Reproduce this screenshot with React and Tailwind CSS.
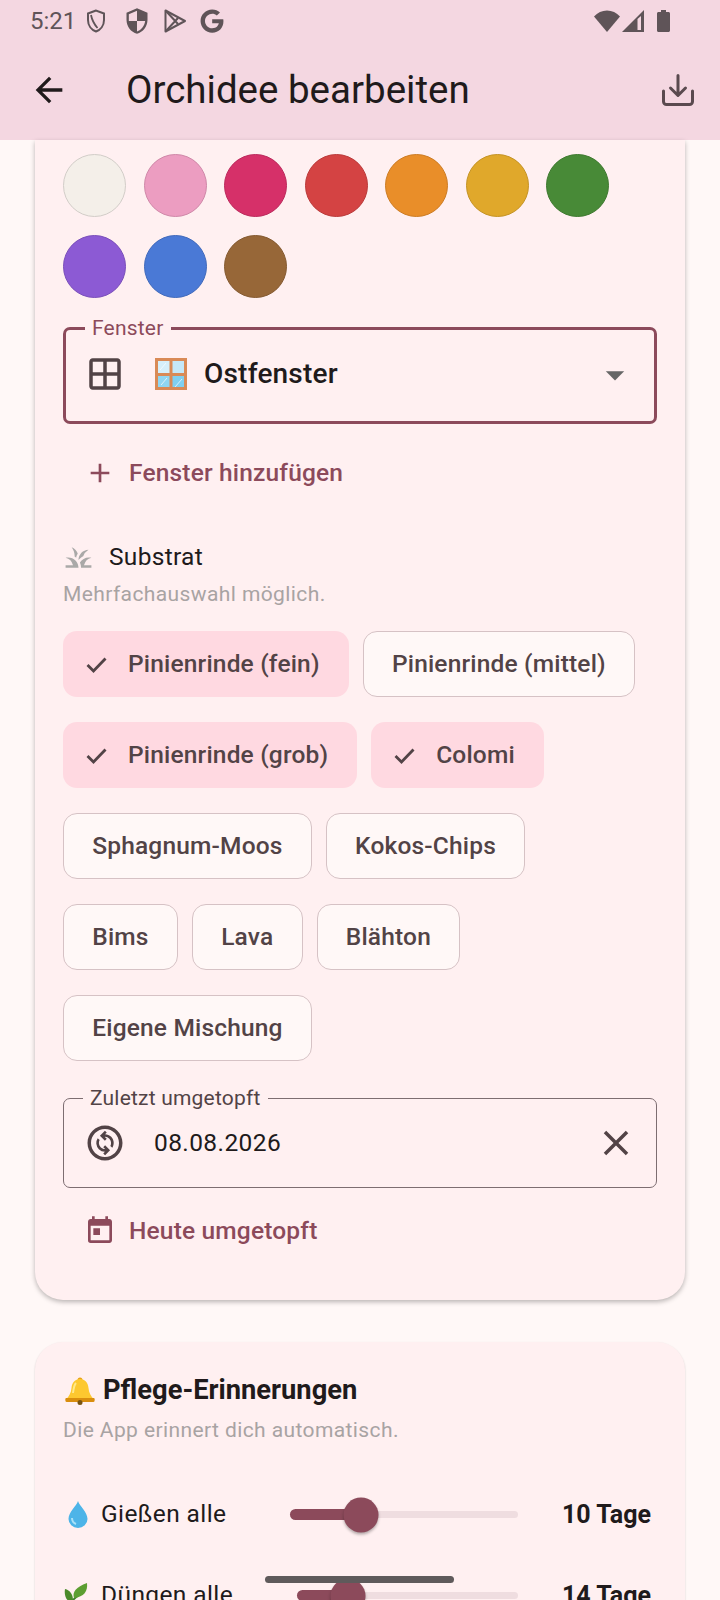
import React from "react";
import {
  MdAdd,
  MdArrowBack,
  MdArrowDropDown,
  MdClose,
  MdGrass,
  MdOutlineChangeCircle,
  MdOutlineWindow,
  MdSecurity,
  MdToday,
} from "react-icons/md";
import { FaGoogle } from "react-icons/fa";

const COLORS_ROW = [
  "bg-[#f4efe9] border-[#d2cdc8]",
  "bg-[#ec9dc1] border-[#cf88a8]",
  "bg-[#d63069] border-[#bb2a5c]",
  "bg-[#d44343] border-[#ba3a3a]",
  "bg-[#e98e29] border-[#cc7c24]",
  "bg-[#e0a82b] border-[#c49325]",
  "bg-[#488a37] border-[#3f7930]",
  "bg-[#8c5ad4] border-[#7a4fba]",
  "bg-[#4a79d6] border-[#416abb]",
  "bg-[#976738] border-[#845a31]",
];

const SUBSTRATE_ROWS = [
  [
    { label: "Pinienrinde (fein)", selected: true },
    { label: "Pinienrinde (mittel)" },
  ],
  [
    { label: "Pinienrinde (grob)", selected: true },
    { label: "Colomi", selected: true },
  ],
  [{ label: "Sphagnum-Moos" }, { label: "Kokos-Chips" }],
  [{ label: "Bims" }, { label: "Lava" }, { label: "Blähton" }],
  [{ label: "Eigene Mischung" }],
];

function StatusBar() {
  return (
    <div className="flex h-[42px] items-center pl-[30px] text-[#5f5458]">
      <span className="w-[57px] text-[24px] leading-none">5:21</span>
      <svg viewBox="0 0 18 24" className="h-[24px] w-[18px]" fill="none" stroke="currentColor" strokeWidth="2">
        <path d="M9 1.5 1 4.5v6.500c0 5.400 3.400 9.800 8 11.500 4.600-1.700 8-6.100 8-11.500V4.500z" />
        <path d="M4 6c1 5 3 9 6.500 13" strokeWidth="1.800" />
      </svg>
      <MdSecurity className="ml-[18px] -mr-[2px] h-[28px] w-[28px]" />
      <svg viewBox="0 0 22 24" className="ml-[15px] h-[24px] w-[22px]" fill="none" stroke="currentColor" strokeWidth="2" strokeLinejoin="round">
        <path d="M1.500 1.500v21L21 12z" />
        <path d="M1.500 1.500 14 15M1.500 22.500 14 9" />
      </svg>
      <FaGoogle className="ml-[14px] h-[24px] w-[24px]" />
      <div className="ml-auto flex items-center pr-[50px]">
        <svg viewBox="0 0 26 22" className="h-[22px] w-[26px]" fill="currentColor">
          <path d="M0 6.500C3.500 2.500 8 .5 13 .5s9.500 2 13 6L13 22z" />
        </svg>
        <svg viewBox="0 0 22 22" className="ml-[2px] h-[22px] w-[22px]" fill="currentColor">
          <path d="M22 0v22H0zM15.500 9v11H19V6z" fillRule="evenodd" />
        </svg>
        <svg viewBox="0 0 13 22" className="ml-[13px] h-[22px] w-[13px]" fill="currentColor">
          <path d="M4 0h5v2h2.500c.8 0 1.500.7 1.500 1.500V20.500c0 .8-.7 1.500-1.500 1.500h-10C.7 22 0 21.300 0 20.500V3.500C0 2.700.7 2 1.500 2H4z" />
        </svg>
      </div>
    </div>
  );
}

function AppBar() {
  return (
    <div className="flex h-[98px] items-center pb-[2px] pl-[35px] pr-[26px]">
      <MdArrowBack className="-ml-[6px] -mr-[6px] h-[40px] w-[40px] shrink-0 text-[#201a1b]" />
      <h1 className="ml-[63px] text-[38.500px] font-normal leading-none text-[#201a1b]">Orchidee bearbeiten</h1>
      <svg viewBox="0 0 32 32" className="ml-auto h-[32px] w-[32px] text-[#5a4a4f]" fill="none" stroke="currentColor" strokeWidth="3" strokeLinecap="round" strokeLinejoin="round">
        <path d="M16 1.500V21M8.500 14l7.500 7.500 7.500-7.500" />
        <path d="M1.500 17v10.500c0 1.700 1.300 3 3 3h23c1.700 0 3-1.300 3-3V17" />
      </svg>
    </div>
  );
}

function WindowEmoji() {
  return (
    <svg viewBox="0 0 32 32" className="h-[32px] w-[32px]">
      <rect width="32" height="32" fill="#d98a56" />
      <rect x="3" y="3" width="11.500" height="12" fill="#d6effa" />
      <rect x="17.500" y="3" width="11.500" height="12" fill="#c5e8f8" />
      <rect x="3" y="18" width="11.500" height="11" fill="#8fd6f2" />
      <rect x="17.500" y="18" width="11.500" height="11" fill="#80d0f0" />
      <path d="M5 12 11 5M20 29l7-8M6 27l6-7" stroke="#ffffff" strokeWidth="1" opacity="0.7" />
    </svg>
  );
}

function BellEmoji() {
  return (
    <svg viewBox="0 0 30 28" className="h-[28px] w-[30px]">
      <circle cx="15" cy="3" r="2.500" fill="#e8a317" />
      <path d="M15 2c-5 0-8 3.500-8.500 9-.4 5-2.500 8-5 11h27c-2.500-3-4.600-6-5-11C23 5.500 20 2 15 2z" fill="#fdc82f" />
      <path d="M1 21h28c1 0 1 4-.5 4h-27C0 25 0 21 1 21z" fill="#d98e0e" />
      <circle cx="15" cy="25.500" r="2.500" fill="#7a5410" />
      <path d="M11 6c-2 2-2.500 6-3 10" stroke="#ffe98a" strokeWidth="2" fill="none" />
    </svg>
  );
}

function DropEmoji() {
  return (
    <svg viewBox="0 0 20 27" className="h-[27px] w-[20px]">
      <path d="M10 0c1.500 5 9.500 11 9.500 18a9.500 9 0 0 1-19 0C.5 11 8.500 5 10 0z" fill="#4db4e8" />
      <path d="M4 17c0 3 1.500 5 4 6" stroke="#a9e1f8" strokeWidth="2" fill="none" />
    </svg>
  );
}

function HerbEmoji() {
  return (
    <svg viewBox="0 0 28 28" className="h-[28px] w-[28px]">
      <path d="M3 27C7 20 12 15 22 8" stroke="#3f7d2c" strokeWidth="2" fill="none" />
      <path d="M11 16C9 10 13 5 24 1c1 8-3 14-13 15z" fill="#5c9e31" />
      <path d="M7 20C3 18 1 13 2 7c5 1 8 6 8 11z" fill="#4a8a2a" />
      <path d="M8 21c4-2 9-2 14 1-4 3-10 3-14-1z" fill="#6fb23b" />
    </svg>
  );
}

function OutlinedField({ label, focused, children, className }) {
  return (
    <div
      className={`relative flex items-center rounded-[7px] ${
        focused ? "border-[3px] border-[#8c4a5b]" : "border-[1.75px] border-[#7d6d71]"
      } ${className}`}
    >
      <span
        className={`absolute left-[19px] top-0 -translate-y-1/2 bg-[#fff0f1] px-[7px] text-[21px] leading-none tracking-[0.2px] ${
          focused ? "-mt-[2px] text-[#8c4a5b]" : "-mt-[1px] text-[#524346]"
        }`}
      >
        {label}
      </span>
      {children}
    </div>
  );
}

function Chip({ label, selected }) {
  if (selected) {
    return (
      <div className="flex h-[66px] items-center rounded-[14px] bg-[#ffd9e1] pl-[21px] pr-[29px] text-[24.5px] font-medium tracking-[0.175px] text-[#524346]">
        <svg viewBox="0 0 25 25" className="mr-[19px] h-[25px] w-[25px]" fill="none" stroke="currentColor" strokeWidth="2.800">
          <path d="M3.500 13 9.500 19 21.500 6.500" />
        </svg>
        {label}
      </div>
    );
  }
  return (
    <div className="flex h-[66px] items-center rounded-[14px] border-[1.75px] border-[#d6c2c5] bg-[#fff8f7] px-[28.250px] text-[24.5px] font-medium tracking-[0.175px] text-[#524346]">
      {label}
    </div>
  );
}

function ReminderRow({ icon, label, value, pct, className }) {
  return (
    <div className={`flex h-[35px] items-center ${className}`}>
      <div className="flex shrink-0 items-center">
        <div className="flex w-[38px] items-center">{icon}</div>
        <span className="whitespace-nowrap text-[24.500px] leading-none tracking-[0.4px] text-[#201a1b]">{label}</span>
      </div>
      <div className="relative ml-[64px] flex h-[11px] flex-1 items-center">
        <div className="h-[7px] w-full rounded-full bg-[#efdde0]" />
        <div className="absolute left-0 h-[11px] rounded-l-full bg-[#8c4a5b]" style={{ width: `${pct}%` }} />
        <div
          className="absolute top-1/2 h-[35px] w-[35px] -translate-x-1/2 -translate-y-1/2 rounded-full bg-[#8c4a5b] shadow-[0_2px_3px_rgba(0,0,0,0.3)]"
          style={{ left: `${pct}%` }}
        />
      </div>
      <span className="ml-[42px] mr-[6px] w-[91px] shrink-0 whitespace-nowrap text-right text-[25px] font-bold leading-none text-[#201a1b]">
        {value}
      </span>
    </div>
  );
}

export default function App() {
  return (
    <div className="relative flex h-[1600px] w-[720px] flex-col overflow-hidden bg-[#fff8f7] font-['Roboto',sans-serif]">
      <header className="shrink-0 bg-[#f4d7e1]">
        <StatusBar />
        <AppBar />
      </header>

      <main className="flex flex-col gap-[42px] px-[35px]">
        <section className="rounded-b-[28px] bg-[#fff0f1] px-[28px] pb-[41px] pt-[14px] shadow-[0_2px_5px_rgba(0,0,0,0.28)]">
          <div className="flex flex-wrap gap-x-[17.500px] gap-y-[18px]">
            {COLORS_ROW.map((c) => (
              <div key={c} className={`h-[63px] w-[63px] rounded-full border-[1.75px] ${c}`} />
            ))}
          </div>

          <OutlinedField label="Fenster" focused className="mt-[29px] h-[97px] pb-[3px]">
            <MdOutlineWindow className="ml-[18px] h-[42px] w-[42px] text-[#524346]" />
            <div className="ml-[29px]"><WindowEmoji /></div>
            <span className="ml-[17px] text-[28px] font-medium leading-none tracking-[0.2px] text-[#201a1b]">Ostfenster</span>
            <MdArrowDropDown className="ml-auto mr-[17px] mt-[2px] h-[44px] w-[44px] text-[#666]" />
          </OutlinedField>

          <button className="mt-[21px] flex h-[56px] items-center pl-[21px] text-[24.500px] font-medium tracking-[0.175px] text-[#8c4a5b]">
            <MdAdd className="h-[32px] w-[32px]" />
            <span className="ml-[13px]">Fenster hinzufügen</span>
          </button>

          <div className="mt-[41px] flex items-center">
            <MdGrass className="h-[31px] w-[31px] text-[#aaa9a8]" />
            <span className="ml-[15px] text-[24.500px] leading-none tracking-[0.3px] text-[#201a1b]">Substrat</span>
          </div>
          <p className="mt-[9px] text-[21px] leading-[25px] tracking-[0.4px] text-[#a8a3a3]">Mehrfachauswahl möglich.</p>

          <div className="mt-[24px] flex flex-col gap-y-[25px]">
            {SUBSTRATE_ROWS.map((row) => (
              <div key={row[0].label} className="flex gap-x-[14px]">
                {row.map((s) => (
                  <Chip key={s.label} label={s.label} selected={s.selected} />
                ))}
              </div>
            ))}
          </div>

          <OutlinedField label="Zuletzt umgetopft" className="mt-[37px] h-[90px]">
            <MdOutlineChangeCircle className="ml-[20px] h-[42px] w-[42px] text-[#524346]" />
            <span className="ml-[28px] text-[24.500px] leading-none tracking-[0.4px] text-[#201a1b]">08.08.2026</span>
            <MdClose className="ml-auto mr-[19px] h-[42px] w-[42px] text-[#524346]" />
          </OutlinedField>

          <button className="mt-[15px] flex h-[56px] items-center pl-[21px] text-[24.500px] font-medium tracking-[0.175px] text-[#8c4a5b]">
            <MdToday className="h-[32px] w-[32px]" />
            <span className="ml-[13px]">Heute umgetopft</span>
          </button>
        </section>

        <section className="rounded-[28px] bg-[#fff0f1] px-[28px] pb-[120px] pt-[33px] shadow-[0_1px_2px_rgba(0,0,0,0.18)]">
          <div className="flex h-[32px] items-center">
            <div className="ml-[2px]"><BellEmoji /></div>
            <h2 className="ml-[8px] text-[27.300px] font-bold leading-none text-[#201a1b]">Pflege-Erinnerungen</h2>
          </div>
          <p className="mt-[11px] text-[21px] leading-[25px] tracking-[0.4px] text-[#a8a3a3]">Die App erinnert dich automatisch.</p>
          <ReminderRow className="mt-[54px]" icon={<div className="ml-[5px]"><DropEmoji /></div>} label="Gießen alle" value="10 Tage" pct={31} />
          <ReminderRow className="mt-[46px]" icon={<HerbEmoji />} label="Düngen alle" value="14 Tage" pct={23} />
        </section>
      </main>

      <div className="absolute bottom-[17px] left-[265px] h-[7px] w-[189px] rounded-full bg-[#5f5a5b]" />
    </div>
  );
}
